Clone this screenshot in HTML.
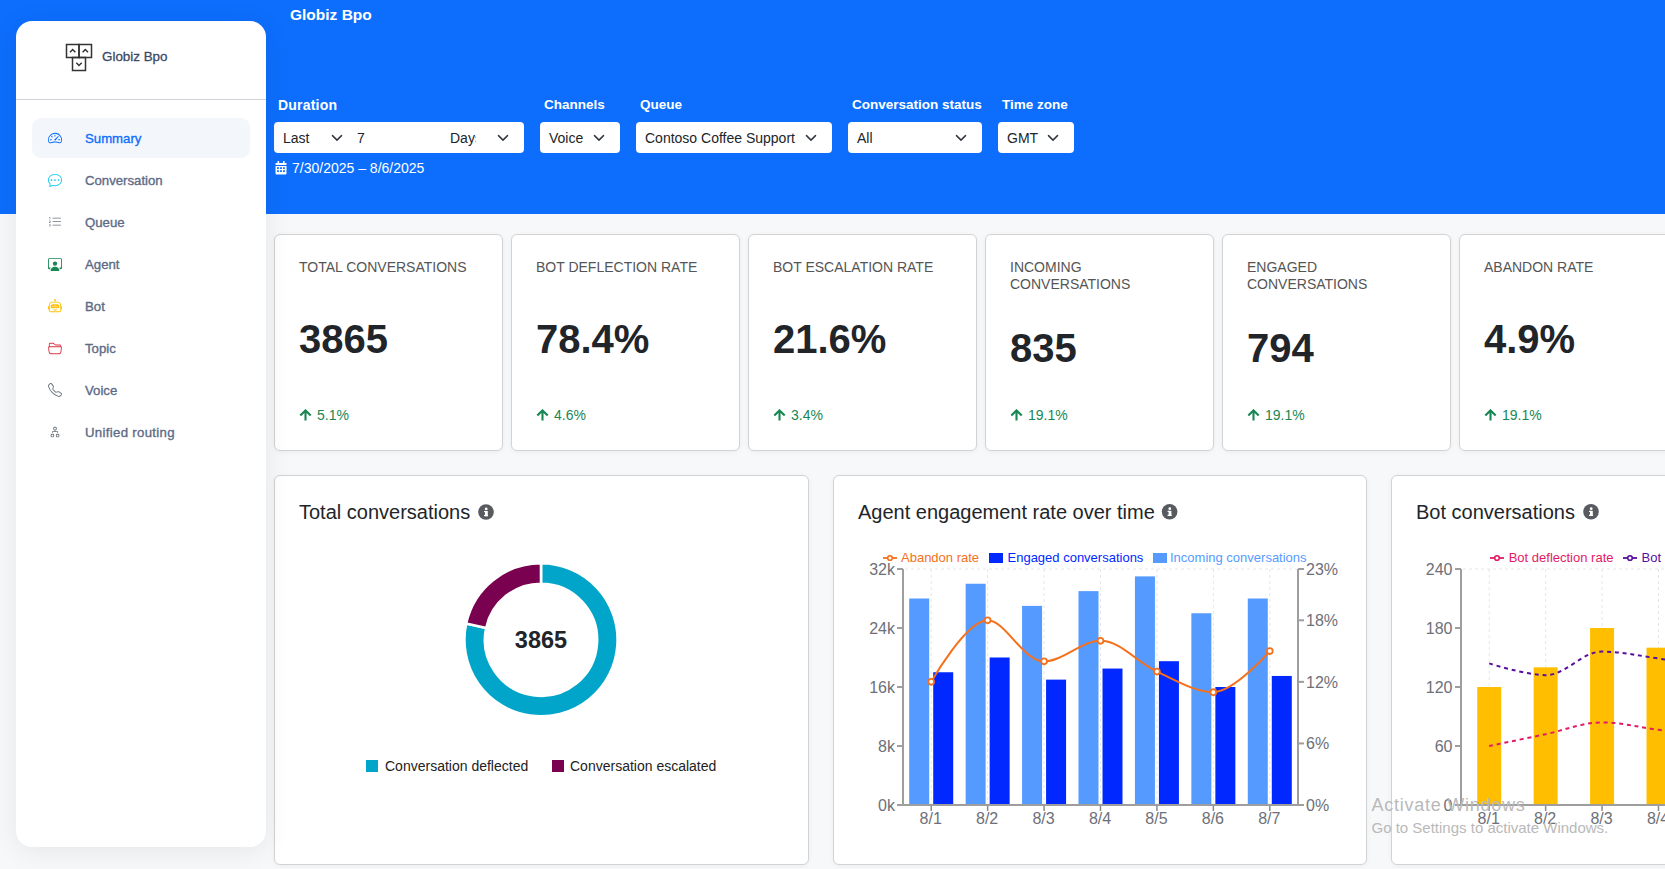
<!DOCTYPE html>
<html><head><meta charset="utf-8">
<style>
*{box-sizing:border-box;margin:0;padding:0}
html,body{width:1665px;height:869px;overflow:hidden}
body{position:relative;background:#f7f8fa;font-family:"Liberation Sans",sans-serif;color:#212529}
.abs{position:absolute}
#hdr{left:0;top:0;width:1665px;height:214px;background:#0d6efd}
#sb{left:16px;top:21px;width:250px;height:826px;background:#fff;border-radius:16px;box-shadow:0 4px 28px rgba(0,0,0,0.075)}
.brand{color:#fff;font-weight:bold;font-size:15.5px;white-space:nowrap}
.lbl{color:#fff;font-weight:bold;font-size:13.5px;white-space:nowrap;top:97px}
.sel{top:122px;height:31px;background:#fff;border-radius:4px;font-size:14px;color:#212529}
.sel span{position:absolute;top:8px;white-space:nowrap}
.chev{position:absolute;top:134px}
.card{background:#fff;border:1px solid #d3d3d3;border-radius:6px;box-shadow:0 1px 5px rgba(0,0,0,0.05)}
.kt{font-size:14px;color:#555;line-height:17px;white-space:nowrap}
.kv{font-size:40px;font-weight:bold;color:#212529;white-space:nowrap}
.kd{font-size:14px;color:#198754;white-space:nowrap}
.nav{left:85px;font-size:13.2px;color:#5d6b86;white-space:nowrap;-webkit-text-stroke:0.35px currentColor}
</style></head><body>
<div id="hdr" class="abs"></div>
<div class="abs brand" style="left:290px;top:6px">Globiz Bpo</div>

<!-- filters -->
<div class="abs lbl" style="left:278px;font-size:14px;letter-spacing:0.2px">Duration</div>
<div class="abs lbl" style="left:544px">Channels</div>
<div class="abs lbl" style="left:640px">Queue</div>
<div class="abs lbl" style="left:852px">Conversation status</div>
<div class="abs lbl" style="left:1002px">Time zone</div>

<div class="abs sel" style="left:274px;width:250px"><span style="left:9px">Last</span><span style="left:83px">7</span><span style="left:176px;width:26px;overflow:hidden">Days</span></div>
<div class="abs sel" style="left:540px;width:80px"><span style="left:9px">Voice</span></div>
<div class="abs sel" style="left:636px;width:196px"><span style="left:9px">Contoso Coffee Support</span></div>
<div class="abs sel" style="left:848px;width:134px"><span style="left:9px">All</span></div>
<div class="abs sel" style="left:998px;width:76px"><span style="left:9px">GMT</span></div>
<svg class="abs" style="left:0;top:0" width="1665" height="214">
<g fill="none" stroke="#343a40" stroke-width="1.5" stroke-linecap="round" stroke-linejoin="round"><path d="M332.5 135.6l4.5 4.5 4.5-4.5"/><path d="M498.5 135.6l4.5 4.5 4.5-4.5"/><path d="M594.5 135.6l4.5 4.5 4.5-4.5"/><path d="M806.5 135.6l4.5 4.5 4.5-4.5"/><path d="M956.5 135.6l4.5 4.5 4.5-4.5"/><path d="M1048.5 135.6l4.5 4.5 4.5-4.5"/></g>
<g fill="#fff">
<rect x="275.5" y="163" width="11" height="2" rx="0.5"/>
<rect x="277.5" y="161" width="1.6" height="3.5" rx="0.5"/>
<rect x="283" y="161" width="1.6" height="3.5" rx="0.5"/>
<path d="M275.5 166h11v7.5a1 1 0 0 1-1 1h-9a1 1 0 0 1-1-1z"/>
</g>
<g fill="#0d6efd">
<rect x="277" y="167.3" width="2" height="1.6"/><rect x="280" y="167.3" width="2" height="1.6"/><rect x="283" y="167.3" width="2" height="1.6"/>
<rect x="277" y="170.3" width="2" height="1.6"/><rect x="280" y="170.3" width="2" height="1.6"/><rect x="283" y="170.3" width="2" height="1.6"/>
</g>
</svg>
<div class="abs" style="left:292px;top:160px;color:#fff;font-size:14px;white-space:nowrap">7/30/2025 – 8/6/2025</div>

<!-- KPI cards -->
<div class="abs card" style="left:274px;top:234px;width:229px;height:217px"></div>
<div class="abs card" style="left:511px;top:234px;width:229px;height:217px"></div>
<div class="abs card" style="left:748px;top:234px;width:229px;height:217px"></div>
<div class="abs card" style="left:985px;top:234px;width:229px;height:217px"></div>
<div class="abs card" style="left:1222px;top:234px;width:229px;height:217px"></div>
<div class="abs card" style="left:1459px;top:234px;width:229px;height:217px"></div>

<div class="abs kt" style="left:299px;top:259px">TOTAL CONVERSATIONS</div>
<div class="abs kv" style="left:299px;top:319px;line-height:40px">3865</div>
<svg class="abs" style="left:299px;top:409px" width="13" height="12"><path d="M6.5 11.5V1.8M1.3 6.6l5.2-5.2 5.2 5.2" fill="none" stroke="#198754" stroke-width="2.1" stroke-linecap="butt" stroke-linejoin="miter"/></svg>
<div class="abs kd" style="left:317px;top:407px;line-height:17px">5.1%</div>
<div class="abs kt" style="left:536px;top:259px">BOT DEFLECTION RATE</div>
<div class="abs kv" style="left:536px;top:319px;line-height:40px">78.4%</div>
<svg class="abs" style="left:536px;top:409px" width="13" height="12"><path d="M6.5 11.5V1.8M1.3 6.6l5.2-5.2 5.2 5.2" fill="none" stroke="#198754" stroke-width="2.1" stroke-linecap="butt" stroke-linejoin="miter"/></svg>
<div class="abs kd" style="left:554px;top:407px;line-height:17px">4.6%</div>
<div class="abs kt" style="left:773px;top:259px">BOT ESCALATION RATE</div>
<div class="abs kv" style="left:773px;top:319px;line-height:40px">21.6%</div>
<svg class="abs" style="left:773px;top:409px" width="13" height="12"><path d="M6.5 11.5V1.8M1.3 6.6l5.2-5.2 5.2 5.2" fill="none" stroke="#198754" stroke-width="2.1" stroke-linecap="butt" stroke-linejoin="miter"/></svg>
<div class="abs kd" style="left:791px;top:407px;line-height:17px">3.4%</div>
<div class="abs kt" style="left:1010px;top:259px">INCOMING<br>CONVERSATIONS</div>
<div class="abs kv" style="left:1010px;top:328px;line-height:40px">835</div>
<svg class="abs" style="left:1010px;top:409px" width="13" height="12"><path d="M6.5 11.5V1.8M1.3 6.6l5.2-5.2 5.2 5.2" fill="none" stroke="#198754" stroke-width="2.1" stroke-linecap="butt" stroke-linejoin="miter"/></svg>
<div class="abs kd" style="left:1028px;top:407px;line-height:17px">19.1%</div>
<div class="abs kt" style="left:1247px;top:259px">ENGAGED<br>CONVERSATIONS</div>
<div class="abs kv" style="left:1247px;top:328px;line-height:40px">794</div>
<svg class="abs" style="left:1247px;top:409px" width="13" height="12"><path d="M6.5 11.5V1.8M1.3 6.6l5.2-5.2 5.2 5.2" fill="none" stroke="#198754" stroke-width="2.1" stroke-linecap="butt" stroke-linejoin="miter"/></svg>
<div class="abs kd" style="left:1265px;top:407px;line-height:17px">19.1%</div>
<div class="abs kt" style="left:1484px;top:259px">ABANDON RATE</div>
<div class="abs kv" style="left:1484px;top:319px;line-height:40px">4.9%</div>
<svg class="abs" style="left:1484px;top:409px" width="13" height="12"><path d="M6.5 11.5V1.8M1.3 6.6l5.2-5.2 5.2 5.2" fill="none" stroke="#198754" stroke-width="2.1" stroke-linecap="butt" stroke-linejoin="miter"/></svg>
<div class="abs kd" style="left:1502px;top:407px;line-height:17px">19.1%</div>

<!-- chart cards -->
<div class="abs card" style="left:274px;top:475px;width:535px;height:390px"></div>
<div class="abs card" style="left:833px;top:475px;width:534px;height:390px"></div>
<div class="abs card" style="left:1391px;top:475px;width:534px;height:390px"></div>

<!-- CHARTS -->
<svg class="abs" style="left:0;top:0" width="1665" height="869" font-family="Liberation Sans, sans-serif">
<text x="299" y="518.8" font-size="20" fill="#212529">Total conversations</text>
<text x="858" y="518.8" font-size="20" fill="#212529">Agent engagement rate over time</text>
<text x="1416" y="518.8" font-size="20" fill="#212529">Bot conversations</text>
<circle cx="486" cy="512" r="7.8" fill="#575a5e"/><rect x="485.0" y="511" width="2.8" height="5.2" fill="#fff"/><rect x="484.0" y="514.9" width="4.0" height="1.3" fill="#fff"/><rect x="484.0" y="511" width="2" height="1.2" fill="#fff"/><circle cx="486.2" cy="508.9" r="1.4" fill="#fff"/>
<circle cx="1169.6" cy="511.8" r="7.8" fill="#575a5e"/><rect x="1168.6" y="510.8" width="2.8" height="5.2" fill="#fff"/><rect x="1167.6" y="514.7" width="4.0" height="1.3" fill="#fff"/><rect x="1167.6" y="510.8" width="2" height="1.2" fill="#fff"/><circle cx="1169.8" cy="508.7" r="1.4" fill="#fff"/>
<circle cx="1591" cy="511.8" r="7.8" fill="#575a5e"/><rect x="1590.0" y="510.8" width="2.8" height="5.2" fill="#fff"/><rect x="1589.0" y="514.7" width="4.0" height="1.3" fill="#fff"/><rect x="1589.0" y="510.8" width="2" height="1.2" fill="#fff"/><circle cx="1591.2" cy="508.7" r="1.4" fill="#fff"/>
<path d="M541.00 563.20A76.6 76.6 0 1 1 466.14 623.56L486.18 627.91A56.1 56.1 0 1 0 541.00 583.70Z" fill="#00a5c9" stroke="#fff" stroke-width="2.6" stroke-linejoin="round"/>
<path d="M466.14 623.56A76.6 76.6 0 0 1 541.00 563.20L541.00 583.70A56.1 56.1 0 0 0 486.18 627.91Z" fill="#7a0050" stroke="#fff" stroke-width="2.6" stroke-linejoin="round"/>
<text x="541.0" y="647.6" font-size="23.5" font-weight="bold" fill="#212529" text-anchor="middle">3865</text>
<rect x="366" y="760" width="12" height="12" fill="#00a5c9"/>
<text x="385" y="771" font-size="14" fill="#222">Conversation deflected</text>
<rect x="552" y="760" width="12" height="12" fill="#7a0050"/>
<text x="570" y="771" font-size="14" fill="#222">Conversation escalated</text>
<g stroke="#e6e6e6" stroke-width="1" stroke-dasharray="3 3">
<line x1="905" y1="569" x2="1297" y2="569"/>
<line x1="931.21" y1="569" x2="931.21" y2="804"/>
<line x1="987.64" y1="569" x2="987.64" y2="804"/>
<line x1="1044.07" y1="569" x2="1044.07" y2="804"/>
<line x1="1100.50" y1="569" x2="1100.50" y2="804"/>
<line x1="1156.93" y1="569" x2="1156.93" y2="804"/>
<line x1="1213.36" y1="569" x2="1213.36" y2="804"/>
<line x1="1269.79" y1="569" x2="1269.79" y2="804"/>
</g>
<rect x="909.21" y="598.50" width="20" height="205.50" fill="#559bff"/>
<rect x="933.21" y="672.25" width="20" height="131.75" fill="#0028ff"/>
<rect x="965.64" y="583.75" width="20" height="220.25" fill="#559bff"/>
<rect x="989.64" y="657.50" width="20" height="146.50" fill="#0028ff"/>
<rect x="1022.07" y="605.88" width="20" height="198.12" fill="#559bff"/>
<rect x="1046.07" y="679.62" width="20" height="124.38" fill="#0028ff"/>
<rect x="1078.50" y="591.12" width="20" height="212.88" fill="#559bff"/>
<rect x="1102.50" y="668.56" width="20" height="135.44" fill="#0028ff"/>
<rect x="1134.93" y="576.38" width="20" height="227.62" fill="#559bff"/>
<rect x="1158.93" y="661.19" width="20" height="142.81" fill="#0028ff"/>
<rect x="1191.36" y="613.25" width="20" height="190.75" fill="#559bff"/>
<rect x="1215.36" y="687.00" width="20" height="117.00" fill="#0028ff"/>
<rect x="1247.79" y="598.50" width="20" height="205.50" fill="#559bff"/>
<rect x="1271.79" y="675.94" width="20" height="128.06" fill="#0028ff"/>
<g stroke="#9e9e9e" stroke-width="2"><line x1="903" y1="569" x2="903" y2="806"/><line x1="1298" y1="569" x2="1298" y2="806"/><line x1="897" y1="805" x2="1304" y2="805"/></g>
<g stroke="#9e9e9e" stroke-width="2">
<line x1="897" y1="805" x2="903" y2="805"/>
<line x1="897" y1="746" x2="903" y2="746"/>
<line x1="897" y1="687" x2="903" y2="687"/>
<line x1="897" y1="628" x2="903" y2="628"/>
<line x1="897" y1="569" x2="903" y2="569"/>
<line x1="1298" y1="805.00" x2="1304" y2="805.00"/>
<line x1="1298" y1="743.43" x2="1304" y2="743.43"/>
<line x1="1298" y1="681.87" x2="1304" y2="681.87"/>
<line x1="1298" y1="620.30" x2="1304" y2="620.30"/>
<line x1="1298" y1="569.00" x2="1304" y2="569.00"/>
</g>
<g stroke="#8a8a8a" stroke-width="1.5">
<line x1="931.21" y1="806" x2="931.21" y2="811"/>
<line x1="987.64" y1="806" x2="987.64" y2="811"/>
<line x1="1044.07" y1="806" x2="1044.07" y2="811"/>
<line x1="1100.50" y1="806" x2="1100.50" y2="811"/>
<line x1="1156.93" y1="806" x2="1156.93" y2="811"/>
<line x1="1213.36" y1="806" x2="1213.36" y2="811"/>
<line x1="1269.79" y1="806" x2="1269.79" y2="811"/>
</g>
<g font-size="16" fill="#6e7079">
<text x="895" y="810.8" text-anchor="end">0k</text>
<text x="895" y="751.8" text-anchor="end">8k</text>
<text x="895" y="692.8" text-anchor="end">16k</text>
<text x="895" y="633.8" text-anchor="end">24k</text>
<text x="895" y="574.8" text-anchor="end">32k</text>
<text x="1306" y="810.80">0%</text>
<text x="1306" y="749.23">6%</text>
<text x="1306" y="687.67">12%</text>
<text x="1306" y="626.10">18%</text>
<text x="1306" y="574.80">23%</text>
<text x="930.71" y="823.8" text-anchor="middle">8/1</text>
<text x="987.14" y="823.8" text-anchor="middle">8/2</text>
<text x="1043.57" y="823.8" text-anchor="middle">8/3</text>
<text x="1100.00" y="823.8" text-anchor="middle">8/4</text>
<text x="1156.43" y="823.8" text-anchor="middle">8/5</text>
<text x="1212.86" y="823.8" text-anchor="middle">8/6</text>
<text x="1269.29" y="823.8" text-anchor="middle">8/7</text>
</g>
<path d="M931.21 681.87 C931.21 681.87 966.12 620.30 987.64 620.30 C1005.62 620.30 1022.84 661.35 1044.07 661.35 C1062.34 661.35 1081.42 640.83 1100.50 640.83 C1120.92 640.83 1136.51 662.32 1156.93 671.61 C1176.01 680.28 1195.09 692.13 1213.36 692.13 C1234.59 692.13 1269.79 651.09 1269.79 651.09" fill="none" stroke="#f5701a" stroke-width="2"/>
<circle cx="931.21" cy="681.87" r="2.9" fill="#fff" stroke="#f5701a" stroke-width="1.8"/>
<circle cx="987.64" cy="620.30" r="2.9" fill="#fff" stroke="#f5701a" stroke-width="1.8"/>
<circle cx="1044.07" cy="661.35" r="2.9" fill="#fff" stroke="#f5701a" stroke-width="1.8"/>
<circle cx="1100.50" cy="640.83" r="2.9" fill="#fff" stroke="#f5701a" stroke-width="1.8"/>
<circle cx="1156.93" cy="671.61" r="2.9" fill="#fff" stroke="#f5701a" stroke-width="1.8"/>
<circle cx="1213.36" cy="692.13" r="2.9" fill="#fff" stroke="#f5701a" stroke-width="1.8"/>
<circle cx="1269.79" cy="651.09" r="2.9" fill="#fff" stroke="#f5701a" stroke-width="1.8"/>
<line x1="883" y1="558" x2="897" y2="558" stroke="#f5701a" stroke-width="1.8"/><circle cx="890" cy="558" r="2.3" fill="#fff" stroke="#f5701a" stroke-width="1.6"/>
<text x="901" y="561.8" font-size="13" fill="#f5701a">Abandon rate</text>
<rect x="989" y="553" width="14" height="10" fill="#0028ff"/>
<text x="1007.5" y="561.8" font-size="13" fill="#0028ff">Engaged conversations</text>
<rect x="1153" y="553" width="14" height="10" fill="#559bff"/>
<text x="1170" y="561.8" font-size="13" fill="#559bff">Incoming conversations</text>
<g stroke="#e6e6e6" stroke-width="1" stroke-dasharray="3 3">
<line x1="1463" y1="569" x2="1665" y2="569"/>
<line x1="1489.21" y1="569" x2="1489.21" y2="804"/>
<line x1="1545.64" y1="569" x2="1545.64" y2="804"/>
<line x1="1602.07" y1="569" x2="1602.07" y2="804"/>
<line x1="1658.50" y1="569" x2="1658.50" y2="804"/>
</g>
<rect x="1477.21" y="687.00" width="24" height="117.00" fill="#ffbf00"/>
<rect x="1533.64" y="667.33" width="24" height="136.67" fill="#ffbf00"/>
<rect x="1590.07" y="628.00" width="24" height="176.00" fill="#ffbf00"/>
<rect x="1646.50" y="647.67" width="24" height="156.33" fill="#ffbf00"/>
<g stroke="#9e9e9e" stroke-width="2"><line x1="1461" y1="569" x2="1461" y2="806"/><line x1="1455" y1="805" x2="1665" y2="805"/></g>
<g stroke="#9e9e9e" stroke-width="2">
<line x1="1455" y1="805" x2="1461" y2="805"/>
<line x1="1455" y1="746" x2="1461" y2="746"/>
<line x1="1455" y1="687" x2="1461" y2="687"/>
<line x1="1455" y1="628" x2="1461" y2="628"/>
<line x1="1455" y1="569" x2="1461" y2="569"/>
</g>
<g stroke="#8a8a8a" stroke-width="1.5">
<line x1="1489.21" y1="806" x2="1489.21" y2="811"/>
<line x1="1545.64" y1="806" x2="1545.64" y2="811"/>
<line x1="1602.07" y1="806" x2="1602.07" y2="811"/>
<line x1="1658.50" y1="806" x2="1658.50" y2="811"/>
</g>
<g font-size="16" fill="#6e7079">
<text x="1452.5" y="810.8" text-anchor="end">0</text>
<text x="1452.5" y="751.8" text-anchor="end">60</text>
<text x="1452.5" y="692.8" text-anchor="end">120</text>
<text x="1452.5" y="633.8" text-anchor="end">180</text>
<text x="1452.5" y="574.8" text-anchor="end">240</text>
<text x="1488.71" y="823.8" text-anchor="middle">8/1</text>
<text x="1545.14" y="823.8" text-anchor="middle">8/2</text>
<text x="1601.57" y="823.8" text-anchor="middle">8/3</text>
<text x="1658.00" y="823.8" text-anchor="middle">8/4</text>
</g>
<path d="M1489.21 663.40 C1489.21 663.40 1526.48 675.20 1545.64 675.20 C1565.98 675.20 1581.60 651.60 1602.07 651.60 C1621.10 651.60 1638.80 655.74 1658.50 658.48 C1678.30 661.24 1695.21 667.33 1714.93 667.33 C1734.71 667.33 1751.46 657.50 1771.36 657.50 C1790.96 657.50 1827.79 657.50 1827.79 657.50" fill="none" stroke="#580f9f" stroke-width="2" stroke-dasharray="4 3.8"/>
<path d="M1489.21 746.00 C1489.21 746.00 1525.89 738.33 1545.64 734.20 C1565.39 730.07 1582.19 722.40 1602.07 722.40 C1621.69 722.40 1638.73 727.36 1658.50 729.77 C1678.23 732.18 1695.12 734.70 1714.93 736.17 C1734.62 737.63 1751.60 738.13 1771.36 738.13 C1791.10 738.13 1827.79 738.13 1827.79 738.13" fill="none" stroke="#e31a66" stroke-width="2" stroke-dasharray="4 3.8"/>
<line x1="1490" y1="558" x2="1504" y2="558" stroke="#e31a66" stroke-width="1.8"/><circle cx="1497" cy="558" r="2.3" fill="#fff" stroke="#e31a66" stroke-width="1.6"/>
<text x="1508.7" y="561.8" font-size="13" fill="#e31a66">Bot deflection rate</text>
<line x1="1623" y1="558" x2="1637" y2="558" stroke="#580f9f" stroke-width="1.8"/><circle cx="1630" cy="558" r="2.3" fill="#fff" stroke="#580f9f" stroke-width="1.6"/>
<text x="1641.6" y="561.8" font-size="13" fill="#580f9f">Bot escalation rate</text>
<text x="1371.5" y="811" font-size="18" letter-spacing="0.75" fill="#b9b9b9">Activate Windows</text>
<text x="1371.5" y="832.5" font-size="15" fill="#b9b9b9">Go to Settings to activate Windows.</text>
</svg>
<!-- /CHARTS -->
<!-- sidebar -->
<div id="sb" class="abs"></div>
<div class="abs" style="left:16px;top:98.5px;width:250px;height:1px;background:#cfd3d8"></div>
<svg class="abs" style="left:60px;top:40px" width="40" height="36">
<g fill="none" stroke="#333" stroke-width="1.5">
<rect x="6.5" y="4.5" width="12.5" height="13"/>
<rect x="19" y="4.5" width="12.5" height="13"/>
<rect x="12.5" y="17.5" width="13" height="13"/>
<path d="M10 12.2l2.7-2.7 2.7 2.7M22.6 12.2l2.7-2.7 2.7 2.7M16.3 22.8l2.7 2.7 2.7-2.7"/>
</g>
</svg>
<div class="abs" style="left:102px;top:49px;font-size:13.4px;color:#3b4a66;white-space:nowrap;-webkit-text-stroke:0.3px currentColor">Globiz Bpo</div>
<div class="abs" style="left:32px;top:118px;width:218px;height:40px;background:#f3f7fb;border-radius:9px"></div>
<div class="abs nav" style="top:131px;color:#0d6efd">Summary</div>
<div class="abs nav" style="top:173px">Conversation</div>
<div class="abs nav" style="top:215px">Queue</div>
<div class="abs nav" style="top:257px">Agent</div>
<div class="abs nav" style="top:299px">Bot</div>
<div class="abs nav" style="top:341px">Topic</div>
<div class="abs nav" style="top:383px">Voice</div>
<div class="abs nav" style="top:425px;letter-spacing:0.32px">Unified routing</div>

<svg class="abs" style="left:48px;top:131px" width="14" height="14" viewBox="0 0 16 16" fill="#0d6efd"><path d="M8 4a.5.5 0 0 1 .5.5V6a.5.5 0 0 1-1 0V4.5A.5.5 0 0 1 8 4M3.732 5.732a.5.5 0 0 1 .707 0l.915.914a.5.5 0 1 1-.708.708l-.914-.915a.5.5 0 0 1 0-.707M2 10a.5.5 0 0 1 .5-.5h1.586a.5.5 0 0 1 0 1H2.5A.5.5 0 0 1 2 10m9.5 0a.5.5 0 0 1 .5-.5h1.5a.5.5 0 0 1 0 1H12a.5.5 0 0 1-.5-.5m.754-4.246a.39.39 0 0 0-.527-.02L7.547 9.31a.91.91 0 1 0 1.302 1.258l3.434-4.297a.39.39 0 0 0-.029-.518z"/><path fill-rule="evenodd" d="M0 10a8 8 0 1 1 15.547 2.661c-.442 1.253-1.845 1.602-2.932 1.25C11.309 13.488 9.475 13 8 13c-1.474 0-3.31.488-4.615.911-1.087.352-2.49.003-2.932-1.25A8 8 0 0 1 0 10m8-7a7 7 0 0 0-6.603 9.329c.203.575.923.876 1.68.63C4.397 12.533 6.358 12 8 12s3.604.532 4.923.96c.757.245 1.477-.056 1.68-.631A7 7 0 0 0 8 3"/></svg>
<svg class="abs" style="left:48px;top:173px" width="14" height="14" viewBox="0 0 16 16" fill="#0dcaf0"><path d="M5 8a1 1 0 1 1-2 0 1 1 0 0 1 2 0m4 0a1 1 0 1 1-2 0 1 1 0 0 1 2 0m3 1a1 1 0 1 0 0-2 1 1 0 0 0 0 2"/><path d="m2.165 15.803.02-.004c1.83-.363 2.948-.842 3.468-1.105A9 9 0 0 0 8 15c4.418 0 8-3.134 8-7s-3.582-7-8-7-8 3.134-8 7c0 1.76.743 3.37 1.97 4.6a10.4 10.4 0 0 1-.524 2.318l-.003.011a11 11 0 0 1-.244.637c-.079.186.074.394.273.362a22 22 0 0 0 .693-.125m.8-3.108a1 1 0 0 0-.287-.801C1.618 10.83 1 9.468 1 8c0-3.192 3.004-6 7-6s7 2.808 7 6-3.004 6-7 6a8 8 0 0 1-2.088-.272 1 1 0 0 0-.711.074c-.387.196-1.24.57-2.634.893a11 11 0 0 0 .398-2"/></svg>
<svg class="abs" style="left:48px;top:215px" width="14" height="14" viewBox="0 0 16 16" fill="#6c757d"><path fill-rule="evenodd" d="M5 11.5a.5.5 0 0 1 .5-.5h9a.5.5 0 0 1 0 1h-9a.5.5 0 0 1-.5-.5m0-4a.5.5 0 0 1 .5-.5h9a.5.5 0 0 1 0 1h-9a.5.5 0 0 1-.5-.5m0-4a.5.5 0 0 1 .5-.5h9a.5.5 0 0 1 0 1h-9a.5.5 0 0 1-.5-.5"/><path d="M1.713 11.865v-.474H2c.217 0 .363-.137.363-.317 0-.185-.158-.31-.361-.31-.223 0-.367.152-.373.31h-.59c.016-.467.373-.787.986-.787.588-.002.954.291.957.703a.595.595 0 0 1-.492.594v.033a.615.615 0 0 1 .569.631c.003.533-.502.8-1.051.8-.656 0-1-.37-1.008-.794h.582c.008.178.186.306.422.309.254 0 .424-.145.422-.35-.002-.195-.155-.348-.414-.348h-.3zm-.004-4.699h-.604v-.035c0-.408.295-.844.958-.844.583 0 .96.326.96.756 0 .389-.257.617-.476.848l-.537.572v.03h1.054V9H1.143v-.395l.957-.99c.138-.142.293-.304.293-.508 0-.18-.147-.32-.342-.32a.33.33 0 0 0-.342.338zM2.564 5h-.635V2.924h-.031l-.598.42v-.567l.629-.443h.635z"/></svg>
<svg class="abs" style="left:48px;top:257px" width="14" height="14" viewBox="0 0 16 16" fill="#198754"><path d="M4 16s-1 0-1-1 1-4 5-4 5 3 5 4-1 1-1 1zm4-5.95a2.5 2.5 0 1 0 0-5 2.5 2.5 0 0 0 0 5"/><path d="M2 1a2 2 0 0 0-2 2v9.5A1.5 1.5 0 0 0 1.5 14h.653a5.4 5.4 0 0 1 1.066-2H1V3a1 1 0 0 1 1-1h12a1 1 0 0 1 1 1v9h-2.219c.554.654.89 1.373 1.066 2h.653a1.5 1.5 0 0 0 1.5-1.5V3a2 2 0 0 0-2-2z"/></svg>
<svg class="abs" style="left:48px;top:299px" width="14" height="14" viewBox="0 0 16 16" fill="#ffc107"><path d="M6 12.5a.5.5 0 0 1 .5-.5h3a.5.5 0 0 1 0 1h-3a.5.5 0 0 1-.5-.5M3 8.062C3 6.76 4.235 5.765 5.53 5.886a26.6 26.6 0 0 0 4.94 0C11.765 5.765 13 6.76 13 8.062v1.157a.93.93 0 0 1-.765.935c-.845.147-2.34.346-4.235.346s-3.39-.2-4.235-.346A.93.93 0 0 1 3 9.219zm4.542-.827a.25.25 0 0 0-.217.068l-.92.9a25 25 0 0 1-1.871-.183.25.25 0 0 0-.068.495c.55.076 1.232.149 2.02.193a.25.25 0 0 0 .189-.071l.754-.736.847 1.71a.25.25 0 0 0 .404.062l.932-.97a25 25 0 0 0 1.922-.188.25.25 0 0 0-.068-.495c-.538.074-1.207.145-1.98.189a.25.25 0 0 0-.166.076l-.754.785-.842-1.7a.25.25 0 0 0-.182-.135"/><path d="M8.5 1.866a1 1 0 1 0-1 0V3h-2A4.5 4.5 0 0 0 1 7.5V8a1 1 0 0 0-1 1v2a1 1 0 0 0 1 1v1a2 2 0 0 0 2 2h10a2 2 0 0 0 2-2v-1a1 1 0 0 0 1-1V9a1 1 0 0 0-1-1v-.5A4.5 4.5 0 0 0 10.5 3h-2zM14 7.5V13a1 1 0 0 1-1 1H3a1 1 0 0 1-1-1V7.5A3.5 3.5 0 0 1 5.5 4h5A3.5 3.5 0 0 1 14 7.5"/></svg>
<svg class="abs" style="left:48px;top:341px" width="14" height="14" viewBox="0 0 16 16" fill="#dc3545"><path d="M1 3.5A1.5 1.5 0 0 1 2.5 2h2.764c.958 0 1.76.56 2.311 1.184C7.985 3.648 8.48 4 9 4h4.5A1.5 1.5 0 0 1 15 5.5v.64c.57.265.94.876.856 1.546l-.64 5.124A2.5 2.5 0 0 1 12.733 15H3.266a2.5 2.5 0 0 1-2.481-2.19l-.64-5.124A1.5 1.5 0 0 1 1 6.14zM2 6h12v-.5a.5.5 0 0 0-.5-.5H9c-.964 0-1.71-.629-2.174-1.154C6.374 3.334 5.82 3 5.264 3H2.5a.5.5 0 0 0-.5.5zm-.367 1a.5.5 0 0 0-.496.562l.64 5.124A1.5 1.5 0 0 0 3.266 14h9.468a1.5 1.5 0 0 0 1.489-1.314l.64-5.124A.5.5 0 0 0 14.367 7z"/></svg>
<svg class="abs" style="left:48px;top:383px" width="14" height="14" viewBox="0 0 16 16" fill="#6c757d"><path d="M3.654 1.328a.678.678 0 0 0-1.015-.063L1.605 2.3c-.483.484-.661 1.169-.45 1.77a17.6 17.6 0 0 0 4.168 6.608 17.6 17.6 0 0 0 6.608 4.168c.601.211 1.286.033 1.77-.45l1.034-1.034a.678.678 0 0 0-.063-1.015l-2.307-1.794a.68.68 0 0 0-.58-.122l-2.19.547a1.75 1.75 0 0 1-1.657-.459L5.482 8.062a1.75 1.75 0 0 1-.46-1.657l.548-2.19a.68.68 0 0 0-.122-.58zM1.884.511a1.745 1.745 0 0 1 2.612.163L6.29 2.98c.329.423.445.974.315 1.494l-.547 2.19a.68.68 0 0 0 .178.643l2.457 2.457a.68.68 0 0 0 .644.178l2.189-.547a1.75 1.75 0 0 1 1.494.315l2.306 1.794c.829.645.905 1.87.163 2.611l-1.034 1.034c-.74.74-1.846 1.065-2.877.702a18.6 18.6 0 0 1-7.01-4.42 18.6 18.6 0 0 1-4.42-7.009c-.362-1.03-.037-2.137.703-2.877z"/></svg>
<svg class="abs" style="left:48px;top:425px" width="14" height="14" viewBox="0 0 16 16" fill="#6c757d"><path fill-rule="evenodd" d="M6 3.5A1.5 1.5 0 0 1 7.5 2h1A1.5 1.5 0 0 1 10 3.5v1A1.5 1.5 0 0 1 8.5 6v1H11a.5.5 0 0 1 .5.5v1a.5.5 0 0 1-1 0V8h-5v.5a.5.5 0 0 1-1 0v-1A.5.5 0 0 1 5 7h2.5V6A1.5 1.5 0 0 1 6 4.5zM8.5 5a.5.5 0 0 0 .5-.5v-1a.5.5 0 0 0-.5-.5h-1a.5.5 0 0 0-.5.5v1a.5.5 0 0 0 .5.5zM3 11.5A1.5 1.5 0 0 1 4.5 10h1A1.5 1.5 0 0 1 7 11.5v1A1.5 1.5 0 0 1 5.5 14h-1A1.5 1.5 0 0 1 3 12.5zm1.5-.5a.5.5 0 0 0-.5.5v1a.5.5 0 0 0 .5.5h1a.5.5 0 0 0 .5-.5v-1a.5.5 0 0 0-.5-.5zm4.5.5a1.5 1.5 0 0 1 1.5-1.5h1a1.5 1.5 0 0 1 1.5 1.5v1a1.5 1.5 0 0 1-1.5 1.5h-1A1.5 1.5 0 0 1 9 12.5zm1.5-.5a.5.5 0 0 0-.5.5v1a.5.5 0 0 0 .5.5h1a.5.5 0 0 0 .5-.5v-1a.5.5 0 0 0-.5-.5z"/></svg>

</body></html>
